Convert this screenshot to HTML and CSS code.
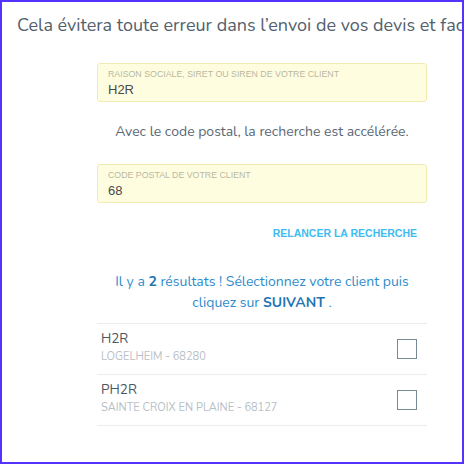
FILE: index.html
```html
<!DOCTYPE html>
<html lang="fr">
<head>
  <meta charset="UTF-8">
  <meta name="viewport" content="width=device-width, initial-scale=1.0">
  <title>Recherche client</title>
  <link rel="stylesheet" href="styles.css">
</head>
<body>
  <div class="frame">
    <p class="intro">Cela évitera toute erreur dans l’envoi de vos devis et factures.</p>

    <div class="search">
      <label class="field">
        <span class="field-label">Raison sociale, SIRET ou SIREN de votre client</span>
        <input class="field-input" type="text" value="H2R">
      </label>

      <p class="hint">Avec le code postal, la recherche est accélérée.</p>

      <label class="field">
        <span class="field-label">Code postal de votre client</span>
        <input class="field-input" type="text" value="68">
      </label>

      <div class="actions">
        <button class="link-button">Relancer la recherche</button>
      </div>

      <p class="results-info">Il y a <b>2</b> résultats ! Sélectionnez votre client puis cliquez sur <b>SUIVANT</b> .</p>

      <ul class="results">
        <li class="result">
          <div class="result-text">
            <div class="result-name">H2R</div>
            <div class="result-city">LOGELHEIM - 68280</div>
          </div>
          <span class="checkbox"></span>
        </li>
        <li class="result">
          <div class="result-text">
            <div class="result-name">PH2R</div>
            <div class="result-city">SAINTE CROIX EN PLAINE - 68127</div>
          </div>
          <span class="checkbox"></span>
        </li>
      </ul>
    </div>
  </div>
</body>
</html>
```

FILE: styles.css
```css
html, body {
  margin: 0;
  padding: 0;
  height: 100%;
  background: white;
}
.frame {
  box-sizing: border-box;
  height: 100%;
  border: 2px solid #5533ff;
  overflow: hidden;
  font-family: 'Nunito', 'Lato', 'Open Sans', sans-serif;
}
.intro {
  margin: 0;
  padding: 11px 0 0 15px;
  font-size: 18px;
  line-height: 24px;
  color: #52606d;
  white-space: nowrap;
}
.search {
  width: 330px;
  margin: 26px 0 0 95px;
  display: flex;
  flex-direction: column;
}
.field {
  display: flex;
  flex-direction: column;
  box-sizing: border-box;
  height: 39px;
  padding: 5px 10px 0;
  background-color: #fffde0;
  border: 1px solid #f1ebb3;
  border-radius: 3px;
}
.field-label {
  font-family: 'Liberation Sans', Arial, sans-serif;
  font-size: 8.8px;
  line-height: 11px;
  text-transform: uppercase;
  color: #b9b8a3;
}
.field-input {
  margin: 2px 0 0;
  padding: 0;
  border: none;
  background: transparent;
  font-family: 'Liberation Sans', Arial, sans-serif;
  font-size: 13px;
  line-height: 16px;
  color: #4a4a4a;
  outline: none;
}
.hint {
  margin: 21px 0 23px;
  text-align: center;
  font-size: 14px;
  line-height: 18px;
  color: #5a6774;
}
.actions {
  display: flex;
  justify-content: flex-end;
  padding: 23px 10px 0 0;
}
.link-button {
  padding: 0;
  border: none;
  background: none;
  font-family: 'Liberation Sans', Arial, sans-serif;
  font-weight: bold;
  font-size: 10.5px;
  line-height: 14px;
  text-transform: uppercase;
  color: #3ebcf2;
  cursor: pointer;
}
.results-info {
  margin: 31px 8px 0;
  text-align: center;
  font-size: 14px;
  line-height: 21px;
  color: #2d8ccb;
}
.results-info b {
  color: #2275b3;
}
.results {
  list-style: none;
  margin: 10px 0 0;
  padding: 0;
  border-top: 1px solid #ececec;
}
.result {
  display: flex;
  align-items: center;
  justify-content: space-between;
  height: 50px;
  padding: 0 10px 0 4px;
  border-bottom: 1px solid #ececec;
}
.result-text {
  margin-top: -3px;
}
.result-name {
  font-size: 13.5px;
  line-height: 19px;
  color: #4b5763;
}
.result-city {
  font-size: 11px;
  line-height: 18px;
  color: #b8c0c6;
}
.checkbox {
  box-sizing: border-box;
  width: 20px;
  height: 20px;
  border: 1.5px solid #768a97;
}
```
